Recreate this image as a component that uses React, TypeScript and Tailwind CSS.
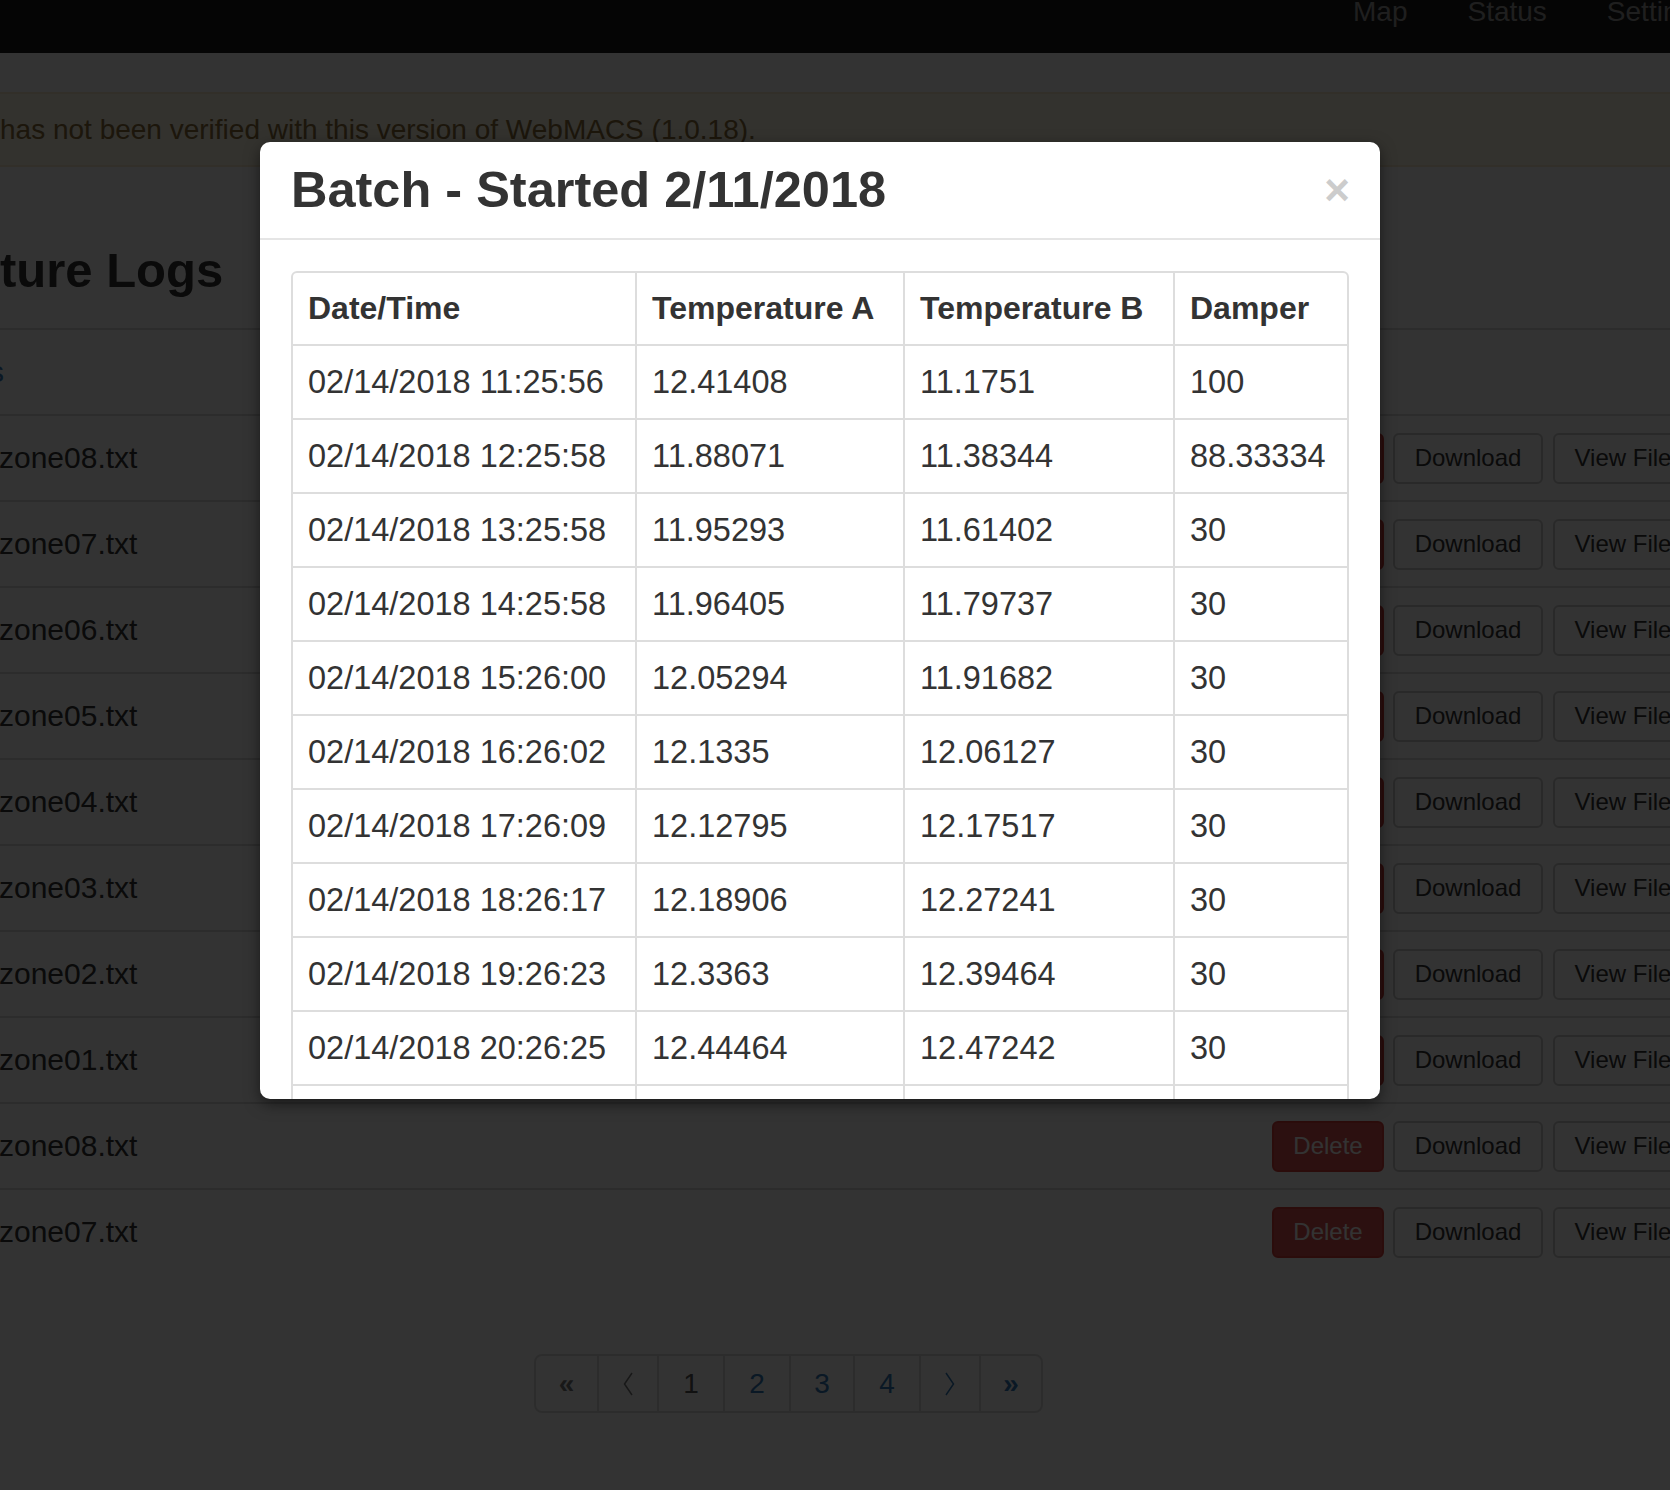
import React from "react";

const readings = [
  ["02/14/2018 11:25:56", "12.41408", "11.1751", "100"],
  ["02/14/2018 12:25:58", "11.88071", "11.38344", "88.33334"],
  ["02/14/2018 13:25:58", "11.95293", "11.61402", "30"],
  ["02/14/2018 14:25:58", "11.96405", "11.79737", "30"],
  ["02/14/2018 15:26:00", "12.05294", "11.91682", "30"],
  ["02/14/2018 16:26:02", "12.1335", "12.06127", "30"],
  ["02/14/2018 17:26:09", "12.12795", "12.17517", "30"],
  ["02/14/2018 18:26:17", "12.18906", "12.27241", "30"],
  ["02/14/2018 19:26:23", "12.3363", "12.39464", "30"],
  ["02/14/2018 20:26:25", "12.44464", "12.47242", "30"],
  ["02/14/2018 21:26:31", "12.50317", "12.55108", "30"],
];

const files = [
  "zone08.txt",
  "zone07.txt",
  "zone06.txt",
  "zone05.txt",
  "zone04.txt",
  "zone03.txt",
  "zone02.txt",
  "zone01.txt",
  "zone08.txt",
  "zone07.txt",
];

function Chevron({ dir }: { dir: "left" | "right" }) {
  return (
    <svg width="10" height="24" viewBox="0 0 10 24" fill="none" stroke="currentColor" strokeWidth="1.5">
      {dir === "left" ? <polyline points="9,1 1.5,12 9,23" /> : <polyline points="1,1 8.5,12 1,23" />}
    </svg>
  );
}

function FileRow({ name }: { name: string }) {
  return (
    <div className="flex h-[86px] items-center border-t-2 border-[#ddd]">
      <div className="w-[1272px] shrink-0 text-[30px] leading-none">
        <span className="-ml-[1px] block">{name}</span>
      </div>
      <div className="flex shrink-0 gap-[9px] text-[24px] leading-none">
        <button className="h-[51px] w-[112px] rounded-[6px] border-2 border-[#d43f3a] bg-[#d9534f] text-white">
          Delete
        </button>
        <button className="h-[51px] w-[150px] rounded-[6px] border-2 border-[#ccc] bg-white text-[#333]">
          Download
        </button>
        <button className="ml-[1px] h-[51px] w-[140px] rounded-[6px] border-2 border-[#ccc] bg-white text-[#333]">
          View File
        </button>
      </div>
    </div>
  );
}

export default function App() {
  return (
    <div className="relative h-[1490px] w-[1670px] overflow-hidden bg-white font-['Liberation_Sans',Arial,sans-serif] text-[#333]">
      {/* top navbar, page is scrolled so only the right-hand links show */}
      <nav className="flex h-[53px] gap-[60px] whitespace-nowrap bg-[#1b1b1b] pl-[1353px] text-[28px] leading-none text-[#9d9d9d]">
        <span className="-mt-[2px]">Map</span>
        <span className="-mt-[2px]">Status</span>
        <span className="-mt-[2px]">Settings</span>
      </nav>

      <div className="mt-[39px] flex h-[75px] items-center whitespace-nowrap border-y-2 border-[#faebcc] bg-[#fcf8e3] text-[28px] text-[#8a6d3b]">
        has not been verified with this version of WebMACS (1.0.18).
      </div>

      <h1 className="mt-[79px] h-[48px] whitespace-nowrap text-[49px] font-bold leading-none">ture Logs</h1>

      <div className="mt-[34px]">
        <div className="flex h-[86px] items-center border-t-2 border-[#ddd] text-[30px] leading-none text-[#337ab7]">
          <span className="-ml-[11px]">s</span>
        </div>
        {files.map((f, i) => (
          <FileRow key={i} name={f} />
        ))}
      </div>

      {/* pagination */}
      <div className="ml-[534px] mt-[80px] flex h-[59px] w-fit overflow-hidden rounded-[8px] border-2 border-[#ddd] bg-white text-[28px] leading-none">
        <div className="flex w-[61px] items-center justify-center font-bold text-[#777]">«</div>
        <div className="flex w-[60px] items-center justify-center border-l-2 border-[#ddd] text-[#777]">
          <Chevron dir="left" />
        </div>
        <div className="flex w-[66px] items-center justify-center border-l-2 border-[#ddd] text-[#555]">1</div>
        <div className="flex w-[66px] items-center justify-center border-l-2 border-[#ddd] text-[#337ab7]">2</div>
        <div className="flex w-[64px] items-center justify-center border-l-2 border-[#ddd] text-[#337ab7]">3</div>
        <div className="flex w-[66px] items-center justify-center border-l-2 border-[#ddd] text-[#337ab7]">4</div>
        <div className="flex w-[60px] items-center justify-center border-l-2 border-[#ddd] text-[#337ab7]">
          <Chevron dir="right" />
        </div>
        <div className="flex w-[62px] items-center justify-center border-l-2 border-[#ddd] font-bold text-[#337ab7]">»</div>
      </div>

      {/* modal backdrop */}
      <div className="absolute inset-0 bg-black/80" />

      {/* modal */}
      <div className="absolute left-[260px] top-[142px] h-[957px] w-[1120px] overflow-hidden rounded-[10px] bg-white shadow-[0_5px_15px_rgba(0,0,0,0.5)]">
        <div className="flex h-[98px] items-center justify-between border-b-2 border-[#e5e5e5] pl-[31px] pr-[30px]">
          <h4 className="text-[50.5px] font-bold leading-none text-[#333]">Batch - Started 2/11/2018</h4>
          <span className="text-[44px] font-bold leading-none text-[#ccc]">×</span>
        </div>

        <div className="px-[31px] pt-[31px]">
          <div className="overflow-hidden rounded-t-[6px] border-2 border-[#ddd]">
            <table className="w-full table-fixed border-separate border-spacing-0 text-left text-[32.5px]">
              <thead>
                <tr>
                  <th className="w-[342px] px-[15px] py-[16px] text-[32px] font-bold leading-[39px]">Date/Time</th>
                  <th className="w-[268px] border-l-2 border-[#ddd] px-[15px] py-[16px] text-[32px] font-bold leading-[39px]">Temperature A</th>
                  <th className="w-[270px] border-l-2 border-[#ddd] px-[15px] py-[16px] text-[32px] font-bold leading-[39px]">Temperature B</th>
                  <th className="w-[174px] border-l-2 border-[#ddd] px-[15px] py-[16px] text-[32px] font-bold leading-[39px]">Damper</th>
                </tr>
              </thead>
              <tbody>
                {readings.map((r, i) => (
                  <tr key={i}>
                    <td className="border-t-2 border-[#ddd] px-[15px] py-[16px] leading-[40px]">{r[0]}</td>
                    <td className="border-l-2 border-t-2 border-[#ddd] px-[15px] py-[16px] leading-[40px]">{r[1]}</td>
                    <td className="border-l-2 border-t-2 border-[#ddd] px-[15px] py-[16px] leading-[40px]">{r[2]}</td>
                    <td className="border-l-2 border-t-2 border-[#ddd] px-[15px] py-[16px] leading-[40px]">{r[3]}</td>
                  </tr>
                ))}
              </tbody>
            </table>
          </div>
        </div>
      </div>
    </div>
  );
}
